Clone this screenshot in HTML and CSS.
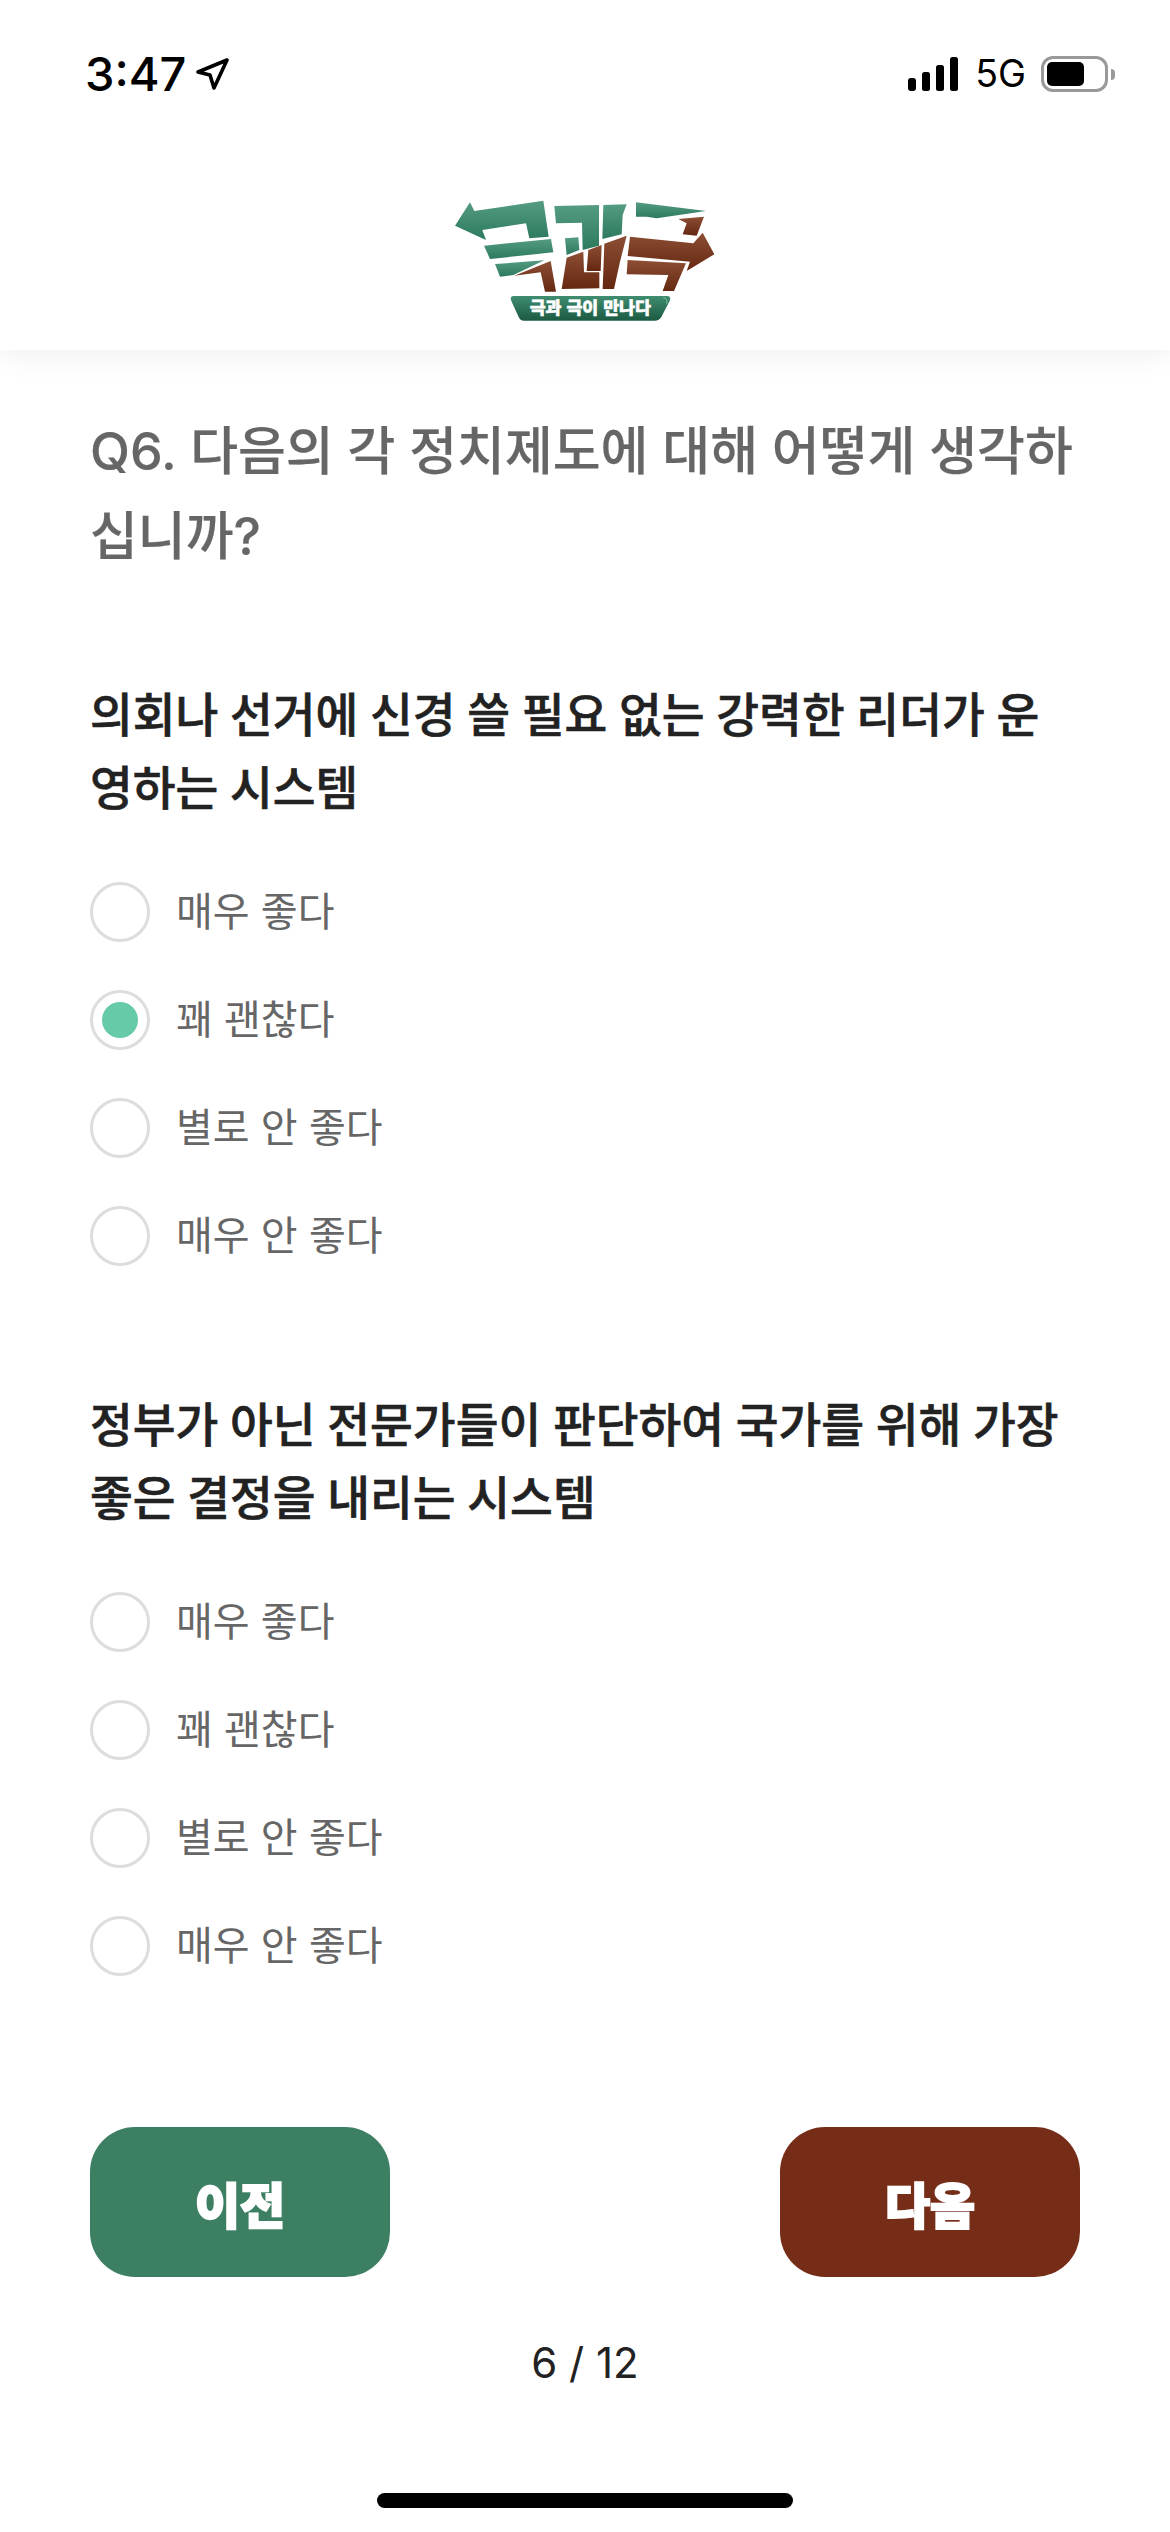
FILE: index.html
```html
<!DOCTYPE html>
<html lang="ko">
<head>
  <meta charset="UTF-8">
  <meta name="viewport" content="width=device-width, initial-scale=1.0">
  <title>극과 극이 만나다</title>
  <link rel="stylesheet" href="styles.css">
</head>
<body>
  <div class="page">
    <header class="top">
      <div class="status">
        <div class="status-left">
          <span class="time">3:47</span>
          <svg class="loc" width="34" height="34" viewBox="0 0 34 34">
            <path d="M3 15 L32 3 L19 31 L15 18 Z" fill="none" stroke="#000" stroke-width="3.6" stroke-linejoin="round"/>
          </svg>
        </div>
        <div class="status-right">
          <svg width="50" height="34" viewBox="0 0 50 34" class="signal">
            <rect x="0" y="21" width="8" height="13" rx="3"/>
            <rect x="14" y="15" width="8" height="19" rx="2.5"/>
            <rect x="28" y="8" width="8" height="26" rx="2.5"/>
            <rect x="42" y="0" width="8" height="34" rx="2.5"/>
          </svg>
          <span class="net">5G</span>
          <div class="battery"><div class="battery-fill"></div></div>
          <div class="battery-nub"></div>
        </div>
      </div>
      <div class="logo-wrap">
        <svg class="logo" width="270" height="130" viewBox="0 0 810 390">
          <defs>
            <linearGradient id="g" x1="0" y1="0" x2="0" y2="1">
              <stop offset="0" stop-color="#559c81"/>
              <stop offset="1" stop-color="#2c7a5e"/>
            </linearGradient>
            <linearGradient id="b" x1="0" y1="0" x2="0" y2="1">
              <stop offset="0" stop-color="#8c4f35"/>
              <stop offset="1" stop-color="#652710"/>
            </linearGradient>
            <linearGradient id="bn" x1="0" y1="0" x2="0" y2="1">
              <stop offset="0" stop-color="#3f8d70"/>
              <stop offset="1" stop-color="#1c5a42"/>
            </linearGradient>
          </defs>
          <g fill="url(#g)">
            <polygon points="15,92 60,22 73,48 280,17 296,125 238,130 228,85 97,105 108,135"/>
            <polygon points="102,152 303,132 310,172 120,192"/>
            <polygon points="135,207 283,196 190,240 150,245"/>
            <polygon points="313,33 447,30 447,152 398,165 396,83 318,85"/>
            <polygon points="345,130 385,127 388,165 350,180"/>
            <polygon points="460,30 530,28 518,60 515,118 457,132"/>
            <polygon points="558,22 768,48 620,70 590,65 558,65"/>
          </g>
          <g fill="url(#b)">
            <polygon points="193,242 302,198 318,290 285,290 272,232"/>
            <polygon points="350,188 400,170 402,232 448,232 448,280 335,282"/>
            <polygon points="415,165 455,150 452,228 410,228"/>
            <polygon points="463,146 530,122 510,200 492,282 458,282"/>
            <polygon points="685,72 762,65 740,122 698,118 710,85"/>
            <polygon points="540,125 730,145 758,113 793,178 710,228 720,200 533,183"/>
            <polygon points="533,195 708,205 672,288 638,288 655,240 530,238"/>
          </g>
          <path d="M192 303 H650 Q664 303 660 316 L634 366 Q628 377 614 377 H222 Q210 377 206 366 L184 318 Q178 303 192 303 Z" fill="url(#bn)"/>
          <path d="M640 308 Q654 310 650 326" fill="none" stroke="#7fc7a6" stroke-width="3"/>
          <text class="logo-text" x="421" y="358">극과 극이 만나다</text>
        </svg>
      </div>
    </header>

    <main class="content">
      <h1 class="title">Q6. 다음의 각 정치제도에 대해 어떻게 생각하십니까?</h1>

      <section class="question">
        <h2>의회나 선거에 신경 쓸 필요 없는 강력한 리더가 운영하는 시스템</h2>
        <div class="options">
          <div class="option"><span class="radio"></span><span class="label">매우 좋다</span></div>
          <div class="option"><span class="radio selected"></span><span class="label">꽤 괜찮다</span></div>
          <div class="option"><span class="radio"></span><span class="label">별로 안 좋다</span></div>
          <div class="option"><span class="radio"></span><span class="label">매우 안 좋다</span></div>
        </div>
      </section>

      <section class="question">
        <h2>정부가 아닌 전문가들이 판단하여 국가를 위해 가장 좋은 결정을 내리는 시스템</h2>
        <div class="options">
          <div class="option"><span class="radio"></span><span class="label">매우 좋다</span></div>
          <div class="option"><span class="radio"></span><span class="label">꽤 괜찮다</span></div>
          <div class="option"><span class="radio"></span><span class="label">별로 안 좋다</span></div>
          <div class="option"><span class="radio"></span><span class="label">매우 안 좋다</span></div>
        </div>
      </section>

      <div class="nav">
        <button class="btn prev">이전</button>
        <button class="btn next">다음</button>
      </div>
      <div class="count">6 / 12</div>
    </main>
    <div class="home-bar"></div>
  </div>
</body>
</html>
```

FILE: styles.css
```css
* {
  box-sizing: border-box;
}
body {
  margin: 0;
  background-color: white;
  font-family: Inter, "Noto Sans CJK KR", sans-serif;
}
.page {
  height: 2532px;
  overflow: hidden;
  display: flex;
  flex-direction: column;
}
.top {
  height: 350px;
  background-color: white;
  box-shadow: 0 4px 30px rgba(0, 0, 0, 0.07);
}
.status {
  height: 98px;
  padding: 50px 55px 0 85px;
  display: flex;
  justify-content: space-between;
  align-items: center;
  color: black;
}
.status-left {
  display: flex;
  align-items: center;
  gap: 9px;
}
.time {
  font-size: 47px;
  font-weight: 500;
  line-height: 48px;
}
.status-right {
  display: flex;
  align-items: center;
}
.signal {
  display: block;
}
.net {
  font-size: 37.5px;
  font-weight: 400;
  line-height: 48px;
  margin-left: 17px;
}
.battery {
  width: 67px;
  height: 36px;
  margin-left: 15px;
  border: 3px solid #999;
  border-radius: 12px;
  padding: 3px;
}
.battery-fill {
  width: 37px;
  height: 24px;
  background-color: black;
  border-radius: 5px;
}
.battery-nub {
  width: 4px;
  height: 11px;
  margin-left: 3px;
  background-color: #999;
  border-radius: 0 4px 4px 0;
}
.logo-wrap {
  display: flex;
  justify-content: center;
  padding-top: 97px;
}
.logo {
  display: block;
}
.logo-text {
  fill: white;
  stroke: white;
  stroke-width: 1.5px;
  font-family: "Noto Sans CJK KR", sans-serif;
  font-size: 52px;
  font-weight: 900;
  text-anchor: middle;
}
.content {
  padding: 59px 90px 0;
}
.title {
  margin: 0;
  font-size: 52px;
  font-weight: 500;
  line-height: 85px;
  color: #666;
  -webkit-text-stroke: 0.2px #666;
}
.question {
  margin-top: 100px;
}
.question + .question {
  margin-top: 123px;
}
.question h2 {
  margin: 0;
  padding-right: 10px;
  font-size: 46.5px;
  font-weight: 500;
  line-height: 73px;
  word-spacing: -0.7px;
  color: #222;
  -webkit-text-stroke: 0.6px #222;
}
.options {
  margin-top: 57px;
  display: flex;
  flex-direction: column;
  gap: 48px;
}
.option {
  display: flex;
  align-items: center;
  gap: 26px;
  height: 60px;
  font-size: 40px;
  color: #666;
}
.label {
  padding-bottom: 6px;
}
.radio {
  width: 60px;
  height: 60px;
  flex-shrink: 0;
  display: flex;
  align-items: center;
  justify-content: center;
  border: 3px solid #ddd;
  border-radius: 50%;
  background-color: white;
}
.radio.selected::after {
  content: "";
  width: 36px;
  height: 36px;
  border-radius: 50%;
  background-color: #66c9a8;
}
.nav {
  margin-top: 151px;
  display: flex;
  justify-content: space-between;
}
.btn {
  width: 300px;
  height: 150px;
  border: none;
  border-radius: 45px;
  color: white;
  font-family: "Noto Sans CJK KR", sans-serif;
  font-size: 49px;
  font-weight: 900;
  -webkit-text-stroke: 2px white;
}
.prev {
  background-color: #3d7f63;
}
.next {
  background-color: #762d18;
}
.count {
  margin-top: 61px;
  text-align: center;
  font-size: 42px;
  line-height: 50px;
  color: #222;
}
.home-bar {
  width: 416px;
  height: 15px;
  margin: auto auto 24px;
  background-color: black;
  border-radius: 8px;
}
```
